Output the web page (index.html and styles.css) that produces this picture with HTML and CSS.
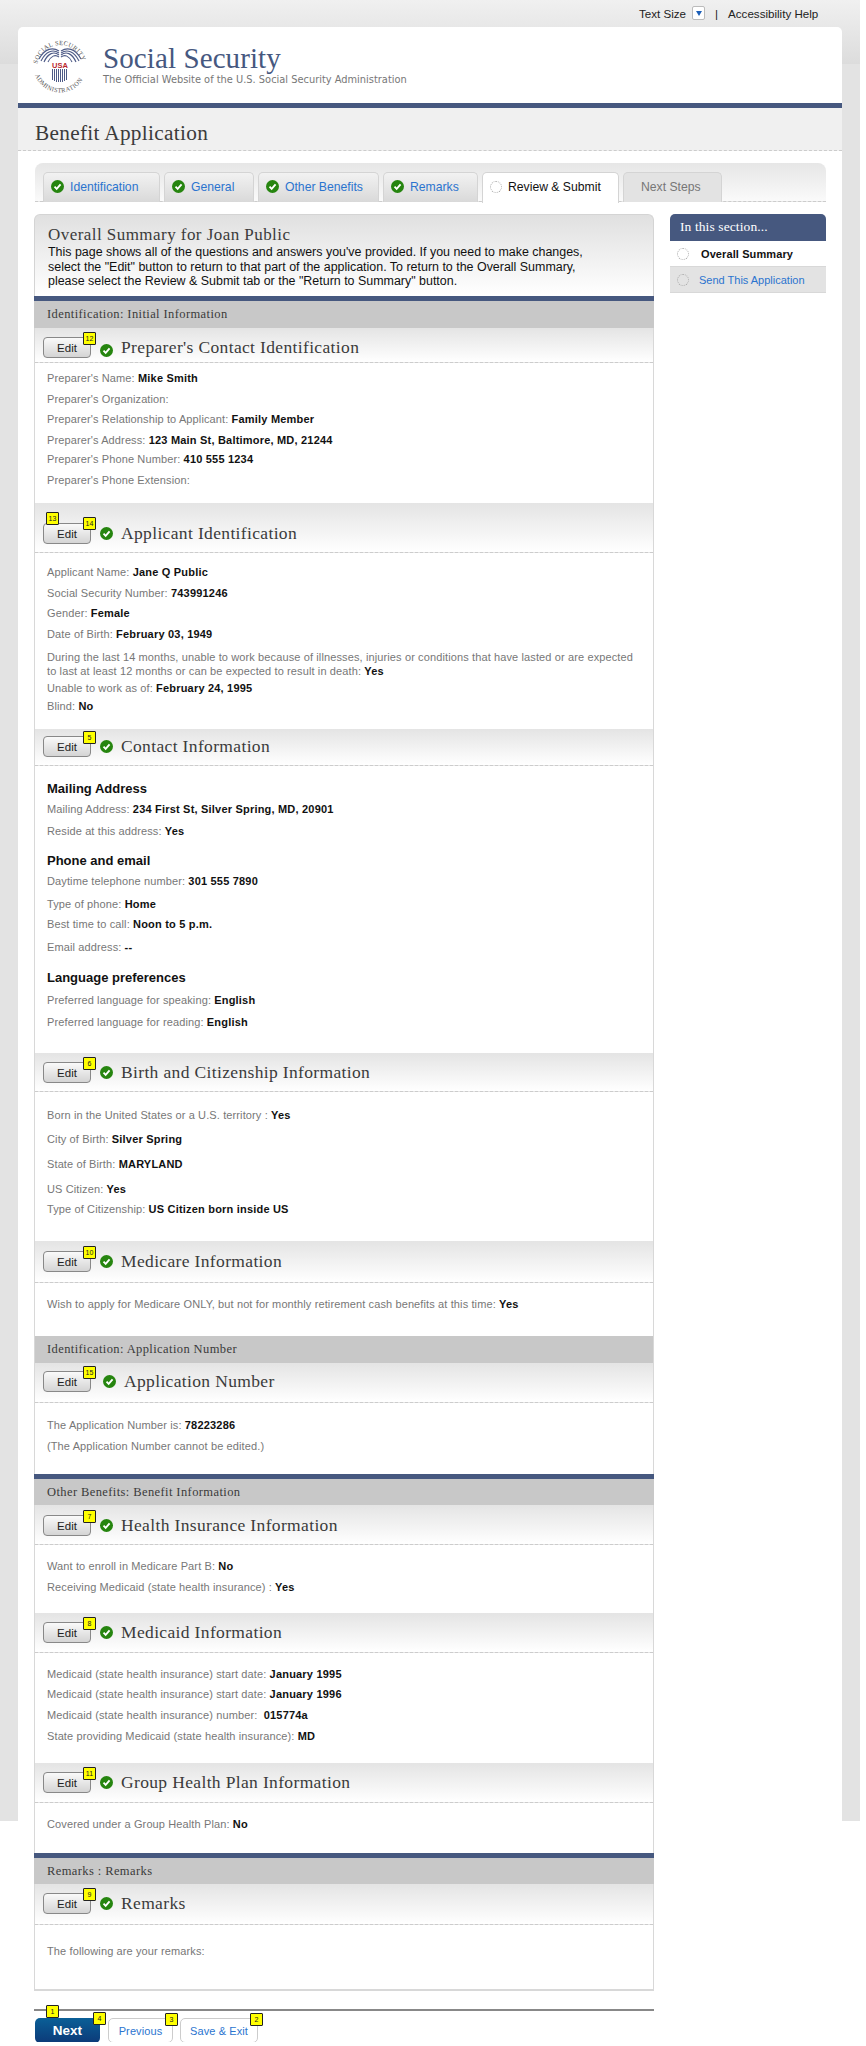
FILE: index.html
```html
<!DOCTYPE html>
<html lang="en">
<head>
  <meta charset="UTF-8">
  <title>Benefit Application - Social Security</title>
  <link rel="stylesheet" href="styles.css">
</head>
<body>
  <svg class="icon-defs" width="0" height="0">
    <symbol id="check" viewBox="0 0 14 14">
      <circle cx="7" cy="7" r="7" fill="#26850f"/>
      <path d="M3.8 7.2 L6.1 9.6 L10.3 4.8" fill="none" stroke="#fff" stroke-width="2"/>
    </symbol>
  </svg>

  <div class="top-links">
    <span>Text Size</span>
    <span class="size-box"><span class="size-arrow"></span></span>
    <span class="top-sep">|</span>
    <span>Accessibility Help</span>
  </div>

  <div class="shell">
    <div class="site-header">
      <svg class="logo" width="56" height="56" viewBox="0 0 56 56">
        <defs>
          <path id="arcTop" d="M5 31 A23 23 0 0 1 51 31"/>
          <path id="arcBottom" d="M1.5 29 A26.5 26.5 0 0 0 54.5 29"/>
        </defs>
        <text class="logo-ring"><textPath href="#arcTop" startOffset="4">SOCIAL SECURITY</textPath></text>
        <text class="logo-ring"><textPath href="#arcBottom" startOffset="9">ADMINISTRATION</textPath></text>
        <g fill="none" stroke="#4d5a86" stroke-width="1.1">
          <path d="M27 14 C21 10 13 11 7 22"/>
          <path d="M27 16 C21 12 14 14 9 24"/>
          <path d="M27 18 C22 14 16 16 12 25"/>
          <path d="M27 20 C23 17 19 19 16 25"/>
          <path d="M29 14 C35 10 43 11 49 22"/>
          <path d="M29 16 C35 12 42 14 47 24"/>
          <path d="M29 18 C34 14 40 16 44 25"/>
          <path d="M29 20 C33 17 37 19 40 25"/>
        </g>
        <text class="logo-usa" x="28" y="31" text-anchor="middle">USA</text>
        <g stroke="#4d5a86" stroke-width="1">
          <path d="M20.5 32 V43"/><path d="M22.5 32 V44"/><path d="M24.5 32 V45"/><path d="M26.5 32 V45"/>
          <path d="M28.5 32 V45"/><path d="M30.5 32 V45"/><path d="M32.5 32 V44"/><path d="M34.5 32 V43"/>
        </g>
      </svg>
      <div class="brand">
        <div class="brand-name">Social Security</div>
        <div class="brand-tag">The Official Website of the U.S. Social Security Administration</div>
      </div>
    </div>

    <div class="title-band">
      <h1>Benefit Application</h1>
    </div>

    <div class="tab-bar">
      <a class="tab tab-1"><svg class="check"><use href="#check"/></svg>Identification</a>
      <a class="tab tab-2"><svg class="check"><use href="#check"/></svg>General</a>
      <a class="tab tab-3"><svg class="check"><use href="#check"/></svg>Other Benefits</a>
      <a class="tab tab-4"><svg class="check"><use href="#check"/></svg>Remarks</a>
      <a class="tab tab-5 tab-active"><span class="radio"></span>Review &amp; Submit</a>
      <a class="tab tab-6 tab-off">Next Steps</a>
    </div>

    <div class="columns">
      <div class="main-col">
        <div class="summary">
          <h2>Overall Summary for Joan Public</h2>
          <p>This page shows all of the questions and answers you've provided. If you need to make changes,<br>
          select the "Edit" button to return to that part of the application. To return to the Overall Summary,<br>
          please select the Review &amp; Submit tab or the "Return to Summary" button.</p>
        </div>

        <div class="panel">
          <div class="bar bar-tall bar-blue">Identification: Initial Information</div>

          <div class="sec sec-preparer">
            <div class="sec-head">
              <button class="edit">Edit<span class="badge">12</span></button>
              <svg class="check"><use href="#check"/></svg>
              <h3>Preparer's Contact Identification</h3>
            </div>
            <div class="sec-body">
              <div class="row g7">Preparer's Name: <b>Mike Smith</b></div>
              <div class="row g6">Preparer's Organization:</div>
              <div class="row g7">Preparer's Relationship to Applicant: <b>Family Member</b></div>
              <div class="row g5">Preparer's Address: <b>123 Main St, Baltimore, MD, 21244</b></div>
              <div class="row g7">Preparer's Phone Number: <b>410 555 1234</b></div>
              <div class="row g16">Preparer's Phone Extension:</div>
            </div>
          </div>

          <div class="sec sec-applicant">
            <div class="sec-head">
              <button class="edit">Edit<span class="badge badge-left">13</span><span class="badge badge-low">14</span></button>
              <svg class="check"><use href="#check"/></svg>
              <h3>Applicant Identification</h3>
            </div>
            <div class="sec-body">
              <div class="row g7">Applicant Name: <b>Jane Q Public</b></div>
              <div class="row g6">Social Security Number: <b>743991246</b></div>
              <div class="row g7">Gender: <b>Female</b></div>
              <div class="row g9">Date of Birth: <b>February 03, 1949</b></div>
              <div class="row g3">During the last 14 months, unable to work because of illnesses, injuries or conditions that have lasted or are expected<br>
              to last at least 12 months or can be expected to result in death: <b>Yes</b></div>
              <div class="row g4">Unable to work as of: <b>February 24, 1995</b></div>
              <div class="row g16">Blind: <b>No</b></div>
            </div>
          </div>

          <div class="sec sec-contact">
            <div class="sec-head">
              <button class="edit">Edit<span class="badge">5</span></button>
              <svg class="check"><use href="#check"/></svg>
              <h3>Contact Information</h3>
            </div>
            <div class="sec-body">
              <h4 class="g5">Mailing Address</h4>
              <div class="row g8">Mailing Address: <b>234 First St, Silver Spring, MD, 20901</b></div>
              <div class="row g15">Reside at this address: <b>Yes</b></div>
              <h4 class="g5">Phone and email</h4>
              <div class="row g9">Daytime telephone number: <b>301 555 7890</b></div>
              <div class="row g6">Type of phone: <b>Home</b></div>
              <div class="row g9">Best time to call: <b>Noon to 5 p.m.</b></div>
              <div class="row g16">Email address: <b>--</b></div>
              <h4 class="g7">Language preferences</h4>
              <div class="row g8">Preferred language for speaking: <b>English</b></div>
              <div class="row g24">Preferred language for reading: <b>English</b></div>
            </div>
          </div>

          <div class="sec sec-birth">
            <div class="sec-head">
              <button class="edit">Edit<span class="badge">6</span></button>
              <svg class="check"><use href="#check"/></svg>
              <h3>Birth and Citizenship Information</h3>
            </div>
            <div class="sec-body">
              <div class="row g10">Born in the United States or a U.S. territory : <b>Yes</b></div>
              <div class="row g11">City of Birth: <b>Silver Spring</b></div>
              <div class="row g11">State of Birth: <b>MARYLAND</b></div>
              <div class="row g6">US Citizen: <b>Yes</b></div>
              <div class="row g25">Type of Citizenship: <b>US Citizen born inside US</b></div>
            </div>
          </div>

          <div class="sec sec-medicare">
            <div class="sec-head">
              <button class="edit">Edit<span class="badge">10</span></button>
              <svg class="check"><use href="#check"/></svg>
              <h3>Medicare Information</h3>
            </div>
            <div class="sec-body">
              <div class="row g25">Wish to apply for Medicare ONLY, but not for monthly retirement cash benefits at this time: <b>Yes</b></div>
            </div>
          </div>

          <div class="bar bar-tall">Identification: Application Number</div>

          <div class="sec sec-number">
            <div class="sec-head">
              <button class="edit">Edit<span class="badge">15</span></button>
              <svg class="check"><use href="#check"/></svg>
              <h3>Application Number</h3>
            </div>
            <div class="sec-body">
              <div class="row g7">The Application Number is: <b>78223286</b></div>
              <div class="row g21">(The Application Number cannot be edited.)</div>
            </div>
          </div>

          <div class="bar bar-blue">Other Benefits: Benefit Information</div>

          <div class="sec sec-health">
            <div class="sec-head">
              <button class="edit">Edit<span class="badge">7</span></button>
              <svg class="check"><use href="#check"/></svg>
              <h3>Health Insurance Information</h3>
            </div>
            <div class="sec-body">
              <div class="row g7">Want to enroll in Medicare Part B: <b>No</b></div>
              <div class="row g19">Receiving Medicaid (state health insurance) : <b>Yes</b></div>
            </div>
          </div>

          <div class="sec sec-medicaid">
            <div class="sec-head">
              <button class="edit">Edit<span class="badge">8</span></button>
              <svg class="check"><use href="#check"/></svg>
              <h3>Medicaid Information</h3>
            </div>
            <div class="sec-body">
              <div class="row g6">Medicaid (state health insurance) start date: <b>January 1995</b></div>
              <div class="row g7">Medicaid (state health insurance) start date: <b>January 1996</b></div>
              <div class="row g7">Medicaid (state health insurance) number: &nbsp;<b>015774a</b></div>
              <div class="row g20">State providing Medicaid (state health insurance): <b>MD</b></div>
            </div>
          </div>

          <div class="sec sec-group">
            <div class="sec-head">
              <button class="edit">Edit<span class="badge">11</span></button>
              <svg class="check"><use href="#check"/></svg>
              <h3>Group Health Plan Information</h3>
            </div>
            <div class="sec-body">
              <div class="row g22">Covered under a Group Health Plan: <b>No</b></div>
            </div>
          </div>

          <div class="bar bar-blue">Remarks : Remarks</div>

          <div class="sec sec-remarks">
            <div class="sec-head">
              <button class="edit">Edit<span class="badge">9</span></button>
              <svg class="check"><use href="#check"/></svg>
              <h3>Remarks</h3>
            </div>
            <div class="sec-body">
              <div class="row g31">The following are your remarks:</div>
            </div>
          </div>
        </div>

        <div class="actions">
          <button class="btn-next">Next<span class="badge badge-first">1</span><span class="badge badge-action">4</span></button>
          <button class="btn-plain btn-prev">Previous<span class="badge badge-action">3</span></button>
          <button class="btn-plain btn-save">Save &amp; Exit<span class="badge badge-action">2</span></button>
        </div>
      </div>

      <div class="side-col">
        <div class="side-title">In this section...</div>
        <div class="side-item side-current"><span class="radio"></span>Overall Summary</div>
        <div class="side-item side-link"><span class="radio"></span>Send This Application</div>
      </div>
    </div>
  </div>
</body>
</html>
```

FILE: styles.css
```css
:root {
  --navy: #46587f;
  --link: #2b74cf;
  --label: #777;
  --heading: #3b3b3b;
  --gutter: #e3e3e3;
}

html, body {
  margin: 0;
  padding: 0;
}

body {
  font-family: "Liberation Sans", Arial, sans-serif;
  font-size: 11px;
  color: #111;
  background:
    linear-gradient(#f0f0f0, #dcdcdc) 0 0 / 860px 64px no-repeat,
    linear-gradient(var(--gutter), var(--gutter)) 0 0 / 860px 1821px no-repeat,
    #fff;
}

.icon-defs {
  display: block;
  height: 0;
}

/* top strip */
.top-links {
  display: flex;
  align-items: center;
  height: 26px;
  padding: 0 0 1px 639px;
  font-size: 11.6px;
  color: #222;
}

.size-box {
  display: flex;
  align-items: center;
  justify-content: center;
  width: 13px;
  height: 14px;
  margin-left: 6px;
  background: #fff;
  border: 1px solid #bbb;
  border-radius: 2px;
  box-sizing: border-box;
}

.size-arrow {
  width: 0;
  height: 0;
  border-left: 3.5px solid transparent;
  border-right: 3.5px solid transparent;
  border-top: 5px solid #1c5fb8;
}

.top-sep {
  margin: 0 10px;
}

/* white page */
.shell {
  width: 824px;
  margin-left: 18px;
  background: #fff;
  border-radius: 5px 5px 0 0;
}

.site-header {
  display: flex;
  height: 76px;
  padding-left: 13px;
  border-bottom: 5px solid var(--navy);
}

.logo {
  margin: 10px 0 0 1px;
  overflow: visible;
}

.logo-ring {
  font-family: "Liberation Serif", serif;
  font-size: 6.4px;
  letter-spacing: 0.35px;
  fill: #555;
}

.logo-usa {
  font-family: "Liberation Sans", sans-serif;
  font-size: 7.5px;
  font-weight: bold;
  fill: #b8262e;
}

.brand {
  margin-left: 15px;
}

.brand-name {
  margin-top: 16px;
  font-family: "Liberation Serif", serif;
  font-size: 29px;
  line-height: 30px;
  letter-spacing: 0.1px;
  color: var(--navy);
}

.brand-tag {
  font-family: "DejaVu Sans", sans-serif;
  font-size: 9.85px;
  line-height: 13px;
  color: #777;
}

.title-band {
  height: 42px;
  background: #f0f0f0;
  border-bottom: 1px dashed #ccc;
}

h1 {
  margin: 0;
  padding: 13px 0 0 17px;
  font-family: "Liberation Serif", serif;
  font-size: 21.3px;
  font-weight: normal;
  line-height: 24px;
  letter-spacing: 0.3px;
  color: var(--heading);
}

/* tabs */
.tab-bar {
  display: flex;
  gap: 4px;
  width: 791px;
  height: 39px;
  margin: 12px 0 0 17px;
  padding: 9px 0 0 8px;
  box-sizing: border-box;
  background: linear-gradient(#e6e6e6, #fafafa);
  border-radius: 8px 8px 0 0;
  border-bottom: 1px dashed #ccc;
}

.tab {
  display: flex;
  align-items: center;
  height: 30px;
  padding: 0 0 2px 7px;
  box-sizing: border-box;
  font-size: 12.2px;
  color: var(--link);
  background: linear-gradient(#f2f2f2, #d9d9d9);
  border: 1px solid #d4d4d4;
  border-bottom: none;
  border-radius: 5px 5px 0 0;
}

.tab .check {
  margin: 0 6px 0 0;
}

.tab .radio {
  margin-right: 6px;
}

.tab-1 { width: 117px; }
.tab-2 { width: 90px; }
.tab-3 { width: 121px; }
.tab-4 { width: 95px; }
.tab-5 { width: 137px; }
.tab-6 { width: 99px; padding-left: 17px; }

.tab-active {
  height: 31px;
  color: #111;
  background: #fff;
}

.tab-off {
  color: #777;
  background: var(--gutter);
}

.radio {
  display: inline-block;
  flex: none;
  width: 12px;
  height: 12px;
  box-sizing: border-box;
  border: 1px dotted #aaa;
  border-radius: 50%;
}

.check {
  flex: none;
  width: 13px;
  height: 13px;
}

/* columns */
.columns {
  display: flex;
  align-items: flex-start;
  padding: 12px 0 0 16px;
}

.main-col {
  width: 620px;
}

.summary {
  height: 82px;
  padding: 10px 0 0 13px;
  box-sizing: border-box;
  background: linear-gradient(#e0e0e0, #fff);
  border: 1px solid #d4d4d4;
  border-bottom: none;
  border-radius: 6px 6px 0 0;
}

h2 {
  margin: 0;
  font-family: "Liberation Serif", serif;
  font-size: 17px;
  font-weight: normal;
  line-height: 20px;
  letter-spacing: 0.45px;
  color: var(--heading);
}

.summary p {
  margin: 0;
  font-size: 12.45px;
  line-height: 14.5px;
  color: #111;
}

.panel {
  border: 1px solid #d8d8d8;
  border-top: none;
  border-bottom-width: 2px;
}

.bar {
  height: 26px;
  padding-left: 12px;
  background: #c8c8c8;
  font-family: "Liberation Serif", serif;
  font-size: 12.5px;
  line-height: 26px;
  letter-spacing: 0.4px;
  color: #3a3a3a;
}

.bar-tall {
  height: 27px;
  line-height: 27px;
}

.bar-blue {
  margin: 0 -1px;
  padding-left: 13px;
  border-top: 5px solid var(--navy);
}

/* one block of answers */
.sec-head {
  display: flex;
  align-items: center;
  padding-left: 8px;
  background: linear-gradient(#e4e4e4, #fff);
  border-bottom: 1px dashed #ccc;
}

.sec-head .check {
  margin-left: 9px;
}

h3 {
  margin: 0 0 2px 8px;
  font-family: "Liberation Serif", serif;
  font-size: 17.5px;
  font-weight: normal;
  line-height: 18px;
  letter-spacing: 0.35px;
  color: var(--heading);
}

.sec-preparer .sec-head { padding-top: 9px; padding-bottom: 4px; }
.sec-preparer .sec-head .check { margin-top: 5px; }
.sec-preparer .sec-body { padding-top: 8px; }
.sec-applicant .sec-head { padding-top: 20px; padding-bottom: 8px; }
.sec-applicant .sec-body { padding-top: 12px; }
.sec-contact .sec-head { padding-top: 7px; padding-bottom: 8px; }
.sec-contact .sec-body { padding-top: 15px; }
.sec-birth .sec-head { padding-top: 9px; padding-bottom: 8px; }
.sec-birth .sec-body { padding-top: 16px; }
.sec-medicare .sec-head { padding-top: 10px; padding-bottom: 10px; }
.sec-medicare .sec-body { padding-top: 14px; }
.sec-number .sec-head { padding-top: 8px; padding-bottom: 10px; }
.sec-number .sec-head .check { margin-left: 12px; }
.sec-number .sec-body { padding-top: 15px; }
.sec-health .sec-head { padding-top: 10px; padding-bottom: 8px; }
.sec-health .sec-body { padding-top: 14px; }
.sec-medicaid .sec-head { padding-top: 9px; padding-bottom: 9px; }
.sec-medicaid .sec-body { padding-top: 14px; }
.sec-group .sec-head { padding-top: 9px; padding-bottom: 9px; }
.sec-group .sec-body { padding-top: 14px; }
.sec-remarks .sec-head { padding-top: 9px; padding-bottom: 10px; }
.sec-remarks .sec-body { padding-top: 19px; }

.sec-body {
  padding-left: 12px;
}

.row {
  line-height: 14px;
  letter-spacing: 0.12px;
  color: var(--label);
}

.row b {
  letter-spacing: 0.2px;
  color: #111;
}

h4 {
  margin: 0;
  font-size: 13px;
  line-height: 16px;
  color: #111;
}

.g3 { margin-bottom: 3px; }
.g4 { margin-bottom: 4px; }
.g5 { margin-bottom: 5px; }
.g6 { margin-bottom: 6px; }
.g7 { margin-bottom: 7px; }
.g8 { margin-bottom: 8px; }
.g9 { margin-bottom: 9px; }
.g10 { margin-bottom: 10px; }
.g11 { margin-bottom: 11px; }
.g15 { margin-bottom: 15px; }
.g16 { margin-bottom: 16px; }
.g19 { margin-bottom: 19px; }
.g20 { margin-bottom: 20px; }
.g21 { margin-bottom: 21px; }
.g22 { margin-bottom: 22px; }
.g24 { margin-bottom: 24px; }
.g25 { margin-bottom: 25px; }
.g31 { margin-bottom: 31px; }

.edit {
  position: relative;
  flex: none;
  width: 48px;
  height: 21px;
  padding: 0;
  font-family: inherit;
  font-size: 11.5px;
  color: #222;
  background: linear-gradient(#fafafa, #d4d4d4);
  border: 1px solid #888;
  border-radius: 4px;
}

.badge {
  position: absolute;
  top: -6px;
  right: -6px;
  width: 13px;
  height: 13px;
  box-sizing: border-box;
  font-family: "Liberation Sans", sans-serif;
  font-size: 7px;
  font-weight: normal;
  letter-spacing: 0;
  line-height: 11px;
  text-align: center;
  color: #222;
  background: #ff0;
  border: 1px solid #222;
  border-radius: 1px;
}

.badge-left {
  left: 2px;
  right: auto;
  top: -12px;
}

.badge-low {
  top: -7px;
}

/* bottom buttons */
.actions {
  display: flex;
  margin-top: 18px;
  padding-top: 7px;
  height: 33px;
  box-sizing: border-box;
  border-top: 2px solid #888;
}

.btn-next {
  position: relative;
  width: 65px;
  height: 25px;
  margin: 0 8px 0 1px;
  padding: 0;
  font-family: inherit;
  font-size: 13.5px;
  font-weight: bold;
  color: #fff;
  background: linear-gradient(#0a5f97, #0c3a78);
  border: none;
  border-radius: 5px;
}

.btn-plain {
  position: relative;
  height: 25px;
  padding: 0;
  font-family: inherit;
  font-size: 11px;
  letter-spacing: 0.1px;
  color: var(--link);
  background: #fff;
  border: 1px solid #ccc;
  border-radius: 5px;
}

.btn-prev {
  width: 65px;
  margin-right: 7px;
}

.btn-save {
  width: 78px;
}

.badge-action {
  top: -6px;
  right: -6px;
}

.badge-first {
  top: -13px;
  left: 11px;
  right: auto;
}

/* sidebar */
.side-col {
  width: 156px;
  margin-left: 16px;
}

.side-title {
  height: 27px;
  padding-left: 10px;
  font-family: "Liberation Serif", serif;
  font-size: 13.5px;
  line-height: 26px;
  letter-spacing: 0.1px;
  color: #fff;
  background: var(--navy);
  border-radius: 5px 5px 0 0;
  box-sizing: border-box;
}

.side-item {
  display: flex;
  align-items: center;
  height: 26px;
  padding-left: 7px;
  box-sizing: border-box;
  border-bottom: 1px solid #d8d8d8;
}

.side-item .radio {
  margin-right: 10px;
}

.side-current {
  font-weight: bold;
  letter-spacing: 0.1px;
  color: #111;
  background: #fff;
}

.side-current .radio {
  margin-right: 12px;
}

.side-link {
  color: var(--link);
  background: var(--gutter);
}
```
